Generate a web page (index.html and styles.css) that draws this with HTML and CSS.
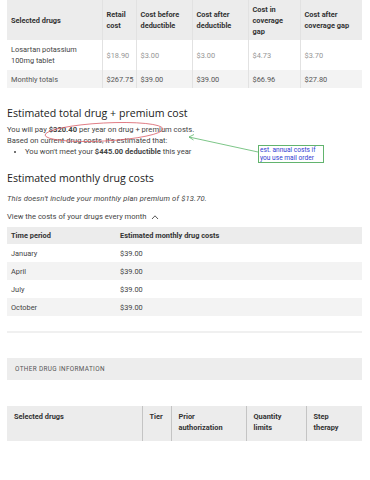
FILE: index.html
```html
<!DOCTYPE html>
<html lang="en">
<head>
    <meta charset="UTF-8">
    <title>Drug costs</title>
    <link rel="stylesheet" href="styles.css">
</head>
<body>
    <div class="page">
        <table class="costs">
            <colgroup>
                <col style="width:95px"><col style="width:34px"><col style="width:56px">
                <col style="width:56px"><col style="width:52px"><col style="width:62px">
            </colgroup>
            <thead>
                <tr>
                    <th>Selected drugs</th>
                    <th>Retail cost</th>
                    <th>Cost before deductible</th>
                    <th>Cost after deductible</th>
                    <th>Cost in coverage gap</th>
                    <th>Cost after coverage gap</th>
                </tr>
            </thead>
            <tbody>
                <tr class="drug">
                    <td>Losartan potassium 100mg tablet</td>
                    <td class="num">$18.90</td>
                    <td class="num">$3.00</td>
                    <td class="num">$3.00</td>
                    <td class="num">$4.73</td>
                    <td class="num">$3.70</td>
                </tr>
                <tr class="totals">
                    <td>Monthly totals</td>
                    <td>$267.75</td>
                    <td>$39.00</td>
                    <td>$39.00</td>
                    <td>$66.96</td>
                    <td>$27.80</td>
                </tr>
            </tbody>
        </table>

        <h2>Estimated total drug + premium cost</h2>
        <p class="line">You will pay <b>$320.40</b> per year on drug + premium costs.</p>
        <p class="line">Based on current drug costs, it's estimated that:</p>
        <ul>
            <li>You won't meet your <b>$445.00 deductible</b> this year</li>
        </ul>

        <h2 class="second">Estimated monthly drug costs</h2>
        <p class="note-italic">This doesn't include your monthly plan premium of $13.70.</p>
        <div class="toggle">View the costs of your drugs every month
            <svg width="8" height="6" viewBox="0 0 8 6"><path d="M1 5 L4 1.8 L7 5" fill="none" stroke="#444" stroke-width="0.9"/></svg>
        </div>

        <table class="monthly">
            <colgroup><col style="width:109px"><col></colgroup>
            <thead>
                <tr><th>Time period</th><th>Estimated monthly drug costs</th></tr>
            </thead>
            <tbody>
                <tr><td>January</td><td>$39.00</td></tr>
                <tr class="alt"><td>April</td><td>$39.00</td></tr>
                <tr><td>July</td><td>$39.00</td></tr>
                <tr class="alt"><td>October</td><td>$39.00</td></tr>
            </tbody>
        </table>

        <div class="rule"></div>

        <div class="section-bar">OTHER DRUG INFORMATION</div>

        <table class="other">
            <colgroup>
                <col style="width:135px"><col style="width:29px"><col style="width:75px">
                <col style="width:60px"><col style="width:56px">
            </colgroup>
            <thead>
                <tr>
                    <th>Selected drugs</th>
                    <th>Tier</th>
                    <th>Prior authorization</th>
                    <th>Quantity limits</th>
                    <th>Step therapy</th>
                </tr>
            </thead>
        </table>

        <!-- hand-drawn review marks -->
        <svg class="marks" width="370" height="480" viewBox="0 0 370 480">
            <ellipse cx="104" cy="132" rx="59" ry="9" transform="rotate(-3 104 132)" fill="none" stroke="#d9606a" stroke-width="0.8"/>
            <path d="M258 152 L189 137" stroke="#5cb86a" stroke-width="0.8" fill="none"/>
            <path d="M194 134.5 L189 137 L193.5 140" stroke="#5cb86a" stroke-width="0.8" fill="none"/>
        </svg>
        <div class="callout">est. annual costs if<br>you use mail order</div>
    </div>
</body>
</html>
```

FILE: styles.css
```css
body {
    margin: 0;
    font-family: Roboto, "Liberation Sans", sans-serif;
    font-size: 7.6px;
    color: #444;
    background: #fff;
}

.page {
    position: relative;
    padding: 0 8px 0 7px;
    height: 480px;
}

table {
    border-collapse: collapse;
    table-layout: fixed;
    width: 355px;
}

th {
    text-align: left;
    font-weight: 700;
    color: #333;
}

.costs {
    font-size: 7.4px;
}

.costs th,
.costs td {
    border-left: 1px solid #e2e2e2;
    padding: 0 4px;
    line-height: 11px;
}

.costs th:first-child,
.costs td:first-child {
    border-left: none;
}

.costs thead tr {
    background: #ececec;
    height: 40px;
}

.costs .drug {
    height: 30px;
}

.costs .drug .num {
    color: #959595;
}

.costs .totals {
    background: #f3f3f3;
    height: 18px;
    color: #555;
}

h2 {
    font-family: "Open Sans", sans-serif;
    font-weight: 400;
    font-size: 10.6px;
    color: #222;
    margin: 18px 0 4px;
    line-height: 14px;
}

h2.second {
    margin-top: 14px;
}

.line {
    margin: 0;
    line-height: 11px;
}

ul {
    margin: 0;
    padding-left: 18px;
    line-height: 11px;
}

.note-italic {
    font-style: italic;
    letter-spacing: 0.15px;
    margin: 8px 0 0;
    line-height: 11px;
}

.toggle {
    margin-top: 7px;
    line-height: 11px;
    display: flex;
    align-items: center;
    gap: 5px;
}

.monthly {
    margin-top: 5px;
    font-size: 7.4px;
}

.monthly th,
.monthly td {
    padding: 0 4px;
    height: 18px;
}

.monthly thead tr {
    background: #ececec;
}

.monthly th {
    height: 17px;
}

.monthly .alt {
    background: #f3f3f3;
}

.rule {
    height: 2px;
    background: #f0f0f0;
    margin-top: 15px;
}

.section-bar {
    margin-top: 25px;
    background: #ededed;
    height: 22px;
    line-height: 22px;
    padding-left: 8px;
    font-size: 6.4px;
    letter-spacing: 0.35px;
    color: #555;
}

.other {
    margin-top: 26px;
    font-size: 7.4px;
}

.other thead tr {
    background: #ececec;
    height: 35px;
}

.other th {
    vertical-align: top;
    padding: 5px 7px 0 7px;
    line-height: 11px;
    border-left: 1.5px solid #c4c4c4;
}

.other th:first-child {
    border-left: none;
}

.marks {
    position: absolute;
    left: 0;
    top: 0;
    pointer-events: none;
}

.callout {
    position: absolute;
    left: 258px;
    top: 145px;
    width: 63px;
    padding: 1px 0 0 1px;
    border: 1px solid #62b46e;
    background: #fff;
    color: #2f3cd0;
    font-size: 6.6px;
    line-height: 7.6px;
}
```
